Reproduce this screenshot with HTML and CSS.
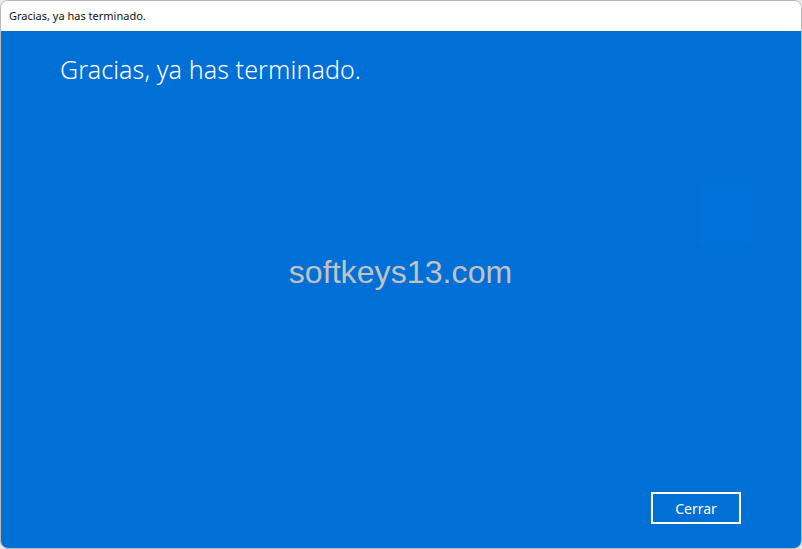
FILE: index.html
```html
<!DOCTYPE html>
<html>

<head>
    <meta charset="utf-8">
    <title>Gracias, ya has terminado.</title>
    <link rel="stylesheet" href="styles.css">
</head>

<body>
    <div class="window">
        <div class="titlebar">Gracias, ya has terminado.</div>
        <div class="content">
            <h1>Gracias, ya has terminado.</h1>
            <div class="middle">
                <div class="ghost-logo"></div>
                <div class="watermark">softkeys13.com</div>
            </div>
            <div class="footer">
                <button class="close-btn">Cerrar</button>
            </div>
        </div>
    </div>
</body>

</html>
```

FILE: styles.css
```css
html, body {
    margin: 0;
    height: 100%;
    background-color: #e9e9e9;
}

body {
    font-family: "Noto Sans", "Open Sans", sans-serif;
}

.window {
    width: 800px;
    height: 547px;
    border: 1px solid #b9b9b9;
    border-radius: 8px;
    overflow: hidden;
    display: flex;
    flex-direction: column;
    background-color: white;
}

.titlebar {
    height: 30px;
    line-height: 30px;
    padding-left: 8px;
    font-size: 11px;
    color: #111;
    background-color: white;
}

.content {
    flex: 1;
    background-color: #0070d6;
    display: flex;
    flex-direction: column;
    padding: 0 60px 24px 59px;
}

h1 {
    margin: 20px 0 0 0;
    font-weight: 300;
    font-size: 25px;
    letter-spacing: 0.1px;
    color: white;
    line-height: 36px;
}

.middle {
    flex: 1;
    position: relative;
    display: flex;
    align-items: center;
    justify-content: center;
}

.watermark {
    font-family: "Liberation Sans", Arial, sans-serif;
    font-size: 32px;
    letter-spacing: 0.1px;
    color: #c2c2c2;
    margin-top: -34px;
}

.ghost-logo {
    position: absolute;
    left: 640px;
    top: 97px;
    width: 52px;
    height: 62px;
    border-radius: 4px;
    background-color: #0072da;
}

.footer {
    display: flex;
    justify-content: flex-end;
}

.close-btn {
    width: 90px;
    height: 32px;
    background-color: transparent;
    border: 2px solid white;
    color: white;
    font-family: "Noto Sans", "Open Sans", sans-serif;
    font-size: 14px;
}
```
